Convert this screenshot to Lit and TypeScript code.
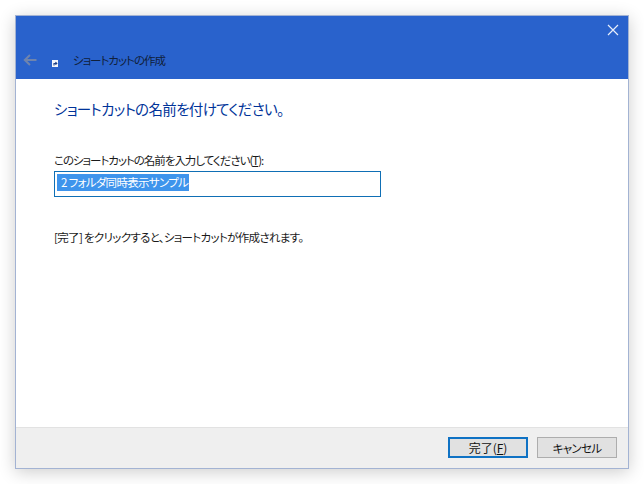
import { LitElement, html, css } from "lit";
import { customElement } from "lit/decorators.js";

@customElement("app-root")
export class AppRoot extends LitElement {
  static styles = css`
    :host {
      display: block;
      width: 644px;
      height: 484px;
      box-sizing: border-box;
      padding: 15px;
      background: #fff;
      font-family: "Noto Sans CJK JP", "Noto Sans", sans-serif;
      font-feature-settings: "palt";
      font-size: 11.5px;
      color: #1a1a1a;
    }
    .window {
      box-sizing: border-box;
      width: 614px;
      height: 454px;
      display: flex;
      flex-direction: column;
      border: 1px solid #a3b3d3;
      background: #fff;
      box-shadow: 0 3px 16px rgba(0, 0, 0, 0.2);
    }
    .titlebar {
      height: 63px;
      background: #2962cc;
      display: flex;
      flex-direction: column;
    }
    .close-row {
      height: 31px;
      display: flex;
      justify-content: flex-end;
      align-items: flex-start;
      padding: 8px 9px 0 0;
      box-sizing: border-box;
    }
    .nav {
      flex: 1;
      display: flex;
      align-items: center;
      padding: 0 0 6px 7px;
    }
    .back { stroke: #6f84ad; }
    .app-icon { margin: 6px 0 0 15px; }
    .caption {
      margin-left: 15px;
      color: #10203a;
      line-height: 16px;
      letter-spacing: -1px;
    }
    .content {
      flex: 1;
      padding: 19px 38px 0 38px;
      display: flex;
      flex-direction: column;
    }
    h1 {
      margin: 0;
      font-size: 14.5px;
      font-weight: 400;
      color: #003399;
      line-height: 22px;
      letter-spacing: -0.65px;
    }
    label {
      margin-top: 32px;
      line-height: 16px;
      display: block;
      letter-spacing: -1.02px;
    }
    .field {
      margin-top: 3px;
      box-sizing: border-box;
      width: 327px;
      height: 26px;
      border: 1px solid #0f6fb5;
      padding: 2px;
      display: flex;
      align-items: flex-start;
    }
    .sel {
      background: #3e94ec;
      color: #fff;
      line-height: 17px;
      height: 17px;
      padding: 0 1px 0 4px;
      letter-spacing: -0.7px;
    }
    .hint { margin-top: 32px; line-height: 16px; letter-spacing: -0.67px; }
    .footer {
      height: 41px;
      box-sizing: border-box;
      background: #efefef;
      border-top: 1px solid #e2e2e2;
      display: flex;
      justify-content: flex-end;
      align-items: flex-start;
      gap: 9px;
      padding: 9px 11px 0 0;
    }
    .btn {
      box-sizing: border-box;
      width: 80px;
      height: 21px;
      background: #e1e1e1;
      border: 1px solid #adadad;
      display: flex;
      align-items: center;
      justify-content: center;
      line-height: 16px;
      color: #111;
    }
    .btn.default { border: 2px solid #0f72c4; font-size: 12px; }
    .btn.cancel { letter-spacing: -0.7px; }
    u { text-underline-offset: 1px; }
  `;

  render() {
    return html`
      <div class="window">
        <div class="titlebar">
          <div class="close-row">
            <svg width="12" height="12" viewBox="0 0 12 12">
              <path d="M1 1L11 11M11 1L1 11" stroke="#e8eefa" stroke-width="1.2" fill="none" />
            </svg>
          </div>
          <div class="nav">
            <svg width="14" height="12" viewBox="0 0 14 12">
              <path class="back" d="M13.5 6H2M7 1L1.8 6L7 11" stroke-width="2" fill="none" />
            </svg>
            <svg class="app-icon" width="6" height="7" viewBox="0 0 6 7">
              <rect width="6" height="7" fill="#f4f6fa" />
              <path d="M2 5.5V3.5H4.5M3.4 2.2L4.8 3.5L3.4 4.6" stroke="#1c3f86" stroke-width="1.1" fill="none" />
            </svg>
            <span class="caption">ショートカットの作成</span>
          </div>
        </div>
        <div class="content">
          <h1>ショートカットの名前を付けてください。</h1>
          <label>このショートカットの名前を入力してください(<u>T</u>):</label>
          <div class="field"><span class="sel">2 フォルダ同時表示サンプル</span></div>
          <div class="hint">[完了] をクリックすると、ショートカットが作成されます。</div>
        </div>
        <div class="footer">
          <div class="btn default"><span>完了(<u>F</u>)</span></div>
          <div class="btn cancel">キャンセル</div>
        </div>
      </div>
    `;
  }
}
